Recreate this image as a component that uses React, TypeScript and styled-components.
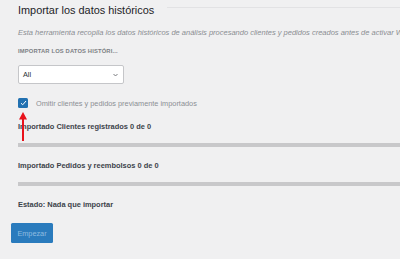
import styled, { createGlobalStyle } from 'styled-components';

const Global = createGlobalStyle`
  html, body {
    margin: 0;
    padding: 0;
    background: #f0f0f1;
    overflow: hidden;
  }
  body {
    font-family: "Liberation Sans", Arial, sans-serif;
  }
`;

const Page = styled.div`
  width: 400px;
  height: 259px;
  box-sizing: border-box;
  padding: 3px 0 0 11px;
  overflow: hidden;
`;

const Section = styled.section`
  padding-left: 7px;
  display: flex;
  flex-direction: column;
  align-items: flex-start;
`;

const TitleRow = styled.div`
  display: flex;
  align-items: flex-start;
  gap: 13px;
  width: 100%;
`;

const Title = styled.h2`
  margin: 0;
  font-size: 10.9px;
  line-height: 14px;
  font-weight: 400;
  color: #1d2327;
  white-space: nowrap;
`;

const Rule = styled.div`
  flex: 1;
  height: 1px;
  margin-top: 4px;
  background: #e2e2e4;
`;

const Description = styled.p`
  margin: 11px 0 0;
  font-size: 7.5px;
  line-height: 10px;
  font-style: italic;
  color: #8a8d91;
  white-space: nowrap;
`;

const FieldLabel = styled.div`
  margin-top: 9px;
  font-size: 5.8px;
  line-height: 8px;
  font-weight: 700;
  letter-spacing: 0.15px;
  text-transform: uppercase;
  color: #7c7f84;
`;

const Select = styled.div`
  margin-top: 10px;
  width: 106px;
  height: 19px;
  box-sizing: border-box;
  border: 1px solid #c5c6c9;
  border-radius: 2px;
  background: #fff;
  display: flex;
  align-items: center;
  justify-content: space-between;
  padding: 0 5px 0 4px;
  font-size: 7.3px;
  color: #2c3338;
`;

const CheckRow = styled.label`
  position: relative;
  margin-top: 14px;
  display: flex;
  align-items: center;
  gap: 8px;
  height: 10px;
  font-size: 7.35px;
  color: #8c8f94;
  white-space: nowrap;
`;

const Box = styled.span`
  width: 10px;
  height: 10px;
  border-radius: 1.5px;
  background: #2271b1;
  display: flex;
  align-items: center;
  justify-content: center;
`;

const Arrow = styled.svg`
  position: absolute;
  left: 0;
  top: 14px;
`;

const Heading = styled.div<{ $gap: number }>`
  margin-top: ${p => p.$gap}px;
  font-size: 7.45px;
  line-height: 10px;
  font-weight: 700;
  color: #3c434a;
  white-space: nowrap;
`;

const Bar = styled.div`
  margin-top: 11px;
  width: calc(100% + 20px);
  height: 4px;
  background: #c8c8ca;
`;

const Button = styled.button`
  margin-top: 13px;
  width: 42px;
  height: 20px;
  border: none;
  border-radius: 1.5px;
  background: #2a7bbd;
  color: #8ebbe0;
  font-family: inherit;
  font-size: 7.3px;
  padding: 0;
`;

export default function App() {
  return (
    <Page>
      <Global />
      <Section>
        <TitleRow>
          <Title>Importar los datos históricos</Title>
          <Rule />
        </TitleRow>
        <Description>
          Esta herramienta recopila los datos históricos de análisis procesando clientes y pedidos creados antes de activar WooCommerce Admin.
        </Description>
        <FieldLabel>Importar los datos históri...</FieldLabel>
        <Select>
          <span>All</span>
          <svg width="5" height="4" viewBox="0 0 5 4">
            <path d="M0.5 1 L2.5 3 L4.5 1" fill="none" stroke="#6b6e73" strokeWidth="0.9" />
          </svg>
        </Select>
        <CheckRow>
          <Box>
            <svg width="7" height="6" viewBox="0 0 7 6">
              <path d="M1 3.2 L2.7 4.8 L6 1" fill="none" stroke="#fff" strokeWidth="1" />
            </svg>
          </Box>
          Omitir clientes y pedidos previamente importados
          <Arrow width="10" height="30" viewBox="0 0 10 30">
            <polygon points="5,0 9,7.5 1,7.5" fill="#e8121b" />
            <rect x="4" y="7" width="2" height="22" fill="#e8121b" />
          </Arrow>
        </CheckRow>
        <Heading $gap={14}>Importado Clientes registrados 0 de 0</Heading>
        <Bar />
        <Heading $gap={14}>Importado Pedidos y reembolsos 0 de 0</Heading>
        <Bar />
        <Heading $gap={14}>Estado: Nada que importar</Heading>
      </Section>
      <Button>Empezar</Button>
    </Page>
  );
}
